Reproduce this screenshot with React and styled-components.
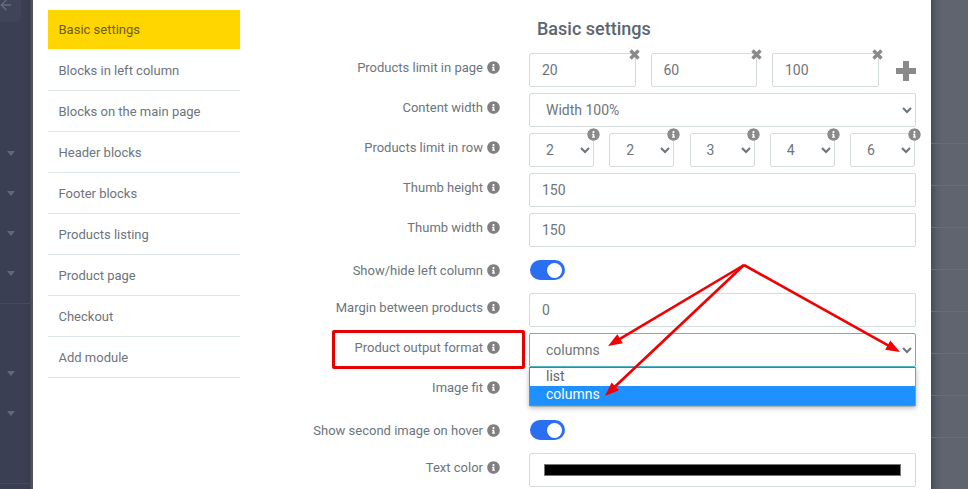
import React from 'react';
import styled, { createGlobalStyle } from 'styled-components';
import { FaInfoCircle } from 'react-icons/fa';
import { ArrowLeft } from 'lucide-react';

const GlobalStyle = createGlobalStyle`
    html, body {
        margin: 0;
        padding: 0;
        height: 100%;
        overflow: hidden;
    }
    body {
        font-family: Roboto, "Liberation Sans", sans-serif;
    }
`;

const Page = styled.div`
    position: relative;
    display: flex;
    width: 968px;
    height: 489px;
    overflow: hidden;
`;

const LeftStrip = styled.div`
    flex: 0 0 33px;
    background: linear-gradient(90deg, #3a3f53 0, #3a3f53 24px, #383b4c 30px, #50535f 31px, #50535f 33px);
    box-sizing: border-box;
`;

const BackBox = styled.div`
    width: 21px;
    height: 22px;
    background: #3f4458;
    border-radius: 0 0 5px 0;
    color: #676c7e;
    overflow: hidden;
    display: flex;
    align-items: flex-start;
    svg {
        margin: -3px 0 0 -2px;
        flex: none;
    }
`;

const Carets = styled.div`
    margin-top: 111px;
    display: flex;
    flex-direction: column;
`;

const CaretRow = styled.div`
    height: 40px;
    padding-left: 7px;
    display: flex;
    align-items: center;
    margin-top: ${p => p.$skip || 0}px;
    &::before {
        content: '';
        border-style: solid;
        border-width: 5px 4.5px 0;
        border-color: #62677a transparent transparent;
    }
`;

const StripLine = styled.div`
    height: 1px;
    background: #454a5d;
    margin-top: ${p => p.$top}px;
`;

const Modal = styled.div`
    flex: 0 0 898px;
    background: #fff;
    display: flex;
    padding-left: 15px;
    box-sizing: border-box;
`;

const RightStrip = styled.div`
    flex: 1;
    padding-top: 143px;
    background: linear-gradient(90deg, #484c5a 0, #5a5f6c 6px, #60646f 12px);
`;

const StripRow = styled.div`
    height: 42px;
    box-sizing: border-box;
    border-top: 1px solid #686c78;
`;

const Side = styled.ul`
    list-style: none;
    margin: 10px 0 0;
    padding: 0;
    width: 192px;
`;

const SideItem = styled.li`
    height: ${p => (p.$active ? 40 : 41)}px;
    box-sizing: border-box;
    padding-left: 10.5px;
    display: flex;
    align-items: center;
    font-size: 13px;
    color: ${p => (p.$active ? '#6a5f14' : '#6c757d')};
    background: ${p => (p.$active ? '#ffd600' : 'transparent')};
    border-bottom: 1px solid ${p => (p.$active ? '#fff6c4' : '#dee5e6')};
`;

const Main = styled.div`
    margin-left: 24px;
    width: 652px;
    padding-top: 19px;
`;

const Heading = styled.h2`
    margin: 0 0 14px 273px;
    height: 20px;
    line-height: 20px;
    font-size: 18px;
    font-weight: 500;
    color: #5a6670;
`;

const FormGrid = styled.div`
    display: grid;
    grid-template-columns: 236px 387px;
    column-gap: 29px;
    grid-auto-rows: 34px;
    row-gap: 6px;
`;

const Label = styled.label`
    display: flex;
    align-items: center;
    justify-content: flex-end;
    gap: 4px;
    font-size: 13px;
    color: #6c757d;
    white-space: nowrap;
    height: ${p => (p.$tall ? 34 : 28)}px;
`;

const InfoIcon = styled(FaInfoCircle)`
    width: 13px;
    height: 13px;
    color: #808080;
    flex: none;
`;

const Control = styled.div`
    display: flex;
    align-items: center;
    gap: ${p => p.$gap || 0}px;
`;

const Field = styled.div`
    position: relative;
    flex: ${p => (p.$fixed ? `0 0 ${p.$fixed}px` : 1)};
`;

const Input = styled.input`
    display: block;
    width: 100%;
    height: 34px;
    box-sizing: border-box;
    border: 1px solid #d5dcdd;
    border-radius: 2px;
    padding: 0 12px 1px;
    font: 14px Roboto, sans-serif;
    color: #6c757d;
    outline: none;
    background: #fff;
`;

const Select = styled.select`
    display: block;
    width: 100%;
    height: 34px;
    box-sizing: border-box;
    border: 1px solid ${p => (p.$focus ? '#52bcc8' : '#d5dcdd')};
    border-radius: 2px;
    padding: 0 12px 1px;
    font: 14px Roboto, sans-serif;
    color: #6c757d;
    background: #fff;
    outline: none;
`;

const RemoveMark = styled.svg`
    position: absolute;
    top: -4px;
    right: -4.5px;
    width: 11px;
    height: 11px;
    color: #8a8a8a;
`;

const RemoveIcon = () => (
    <RemoveMark viewBox="0 0 11 11">
        <path d="M1.5 1.5l8 8M9.5 1.5l-8 8" stroke="currentColor" strokeWidth="3.4" fill="none" />
    </RemoveMark>
);

const FieldInfo = styled(FaInfoCircle)`
    position: absolute;
    top: -5.5px;
    right: -5.5px;
    width: 13px;
    height: 13px;
    color: #8a8a8a;
    background: #fff;
    border-radius: 50%;
`;

const AddMark = styled.svg`
    width: 20px;
    height: 20px;
    color: #8a8a8a;
    flex: none;
    margin: 1px 0 0 2px;
`;

const AddIcon = () => (
    <AddMark viewBox="0 0 20 20">
        <path d="M7 0h6v7h7v6h-7v7H7v-7H0V7h7z" fill="currentColor" />
    </AddMark>
);

const Toggle = styled.div`
    width: 35px;
    height: 20px;
    margin-left: 1px;
    border-radius: 10px;
    background: #2b6ff0;
    position: relative;
    &::after {
        content: '';
        position: absolute;
        top: 2.5px;
        right: 3px;
        width: 15px;
        height: 15px;
        border-radius: 50%;
        background: #fff;
    }
`;

const ColorSwatch = styled.div`
    width: 100%;
    height: 34px;
    box-sizing: border-box;
    border: 1px solid #d5dcdd;
    border-radius: 2px;
    padding: 10px 14px;
    display: flex;
    background: #fff;
`;

const ColorBar = styled.div`
    flex: 1;
    background: #000;
    border: 1px solid #777;
`;

const Dropdown = styled.ul`
    position: absolute;
    top: 34px;
    left: 0;
    right: 0;
    margin: 0;
    padding: 0;
    list-style: none;
    background: #fff;
    border: 1px solid #7a8a90;
    border-top-color: #4a808c;
    border-right-color: #999;
    box-shadow: 0 2px 5px rgba(0, 0, 0, 0.28);
    z-index: 2;
`;

const DropdownItem = styled.li`
    height: ${p => (p.$selected ? 19 : 18)}px;
    line-height: 16px;
    padding-left: 16px;
    font-size: 14px;
    color: ${p => (p.$selected ? '#fff' : '#666')};
    background: ${p => (p.$selected ? '#1e90ff' : '#fff')};
`;

const Callout = styled.div`
    position: absolute;
    left: 332px;
    top: 329.5px;
    width: 193px;
    height: 39px;
    box-sizing: border-box;
    border: 3px solid #e60000;
    border-radius: 2px;
    pointer-events: none;
`;

const Arrows = styled.svg`
    position: absolute;
    left: 0;
    top: 0;
    z-index: 3;
    pointer-events: none;
`;

const menu = ['Blocks in left column', 'Blocks on the main page', 'Header blocks', 'Footer blocks', 'Products listing', 'Product page', 'Checkout', 'Add module'];

const Info = ({ children, tall }) => (
    <Label $tall={tall}>
        {children}
        <InfoIcon />
    </Label>
);

const arrows = [
    [744, 265, 608, 346],
    [744, 265, 605, 396],
    [744, 265, 900, 352],
];

const ArrowLine = ({ x1, y1, x2, y2 }) => {
    const angle = Math.atan2(y2 - y1, x2 - x1);
    const len = 15;
    const wing = 0.36;
    const a = [x2 - len * Math.cos(angle - wing), y2 - len * Math.sin(angle - wing)];
    const b = [x2 - len * Math.cos(angle + wing), y2 - len * Math.sin(angle + wing)];
    return (
        <g>
            <line x1={x1} y1={y1} x2={x2 - 8 * Math.cos(angle)} y2={y2 - 8 * Math.sin(angle)} stroke="#f00000" strokeWidth="2.6" />
            <polygon points={`${x2},${y2} ${a[0]},${a[1]} ${b[0]},${b[1]}`} fill="#f00000" />
        </g>
    );
};

const App = () => (
    <Page>
        <GlobalStyle />
        <LeftStrip>
            <BackBox><ArrowLeft size={16} strokeWidth={2} /></BackBox>
            <Carets>
                <CaretRow />
                <CaretRow />
                <CaretRow />
                <CaretRow />
                <StripLine $top={10} />
                <CaretRow $skip={49} />
                <CaretRow />
                <StripLine $top={50} />
            </Carets>
        </LeftStrip>
        <Modal>
            <Side>
                <SideItem $active>Basic settings</SideItem>
                {menu.map(m => <SideItem key={m}>{m}</SideItem>)}
            </Side>
            <Main>
                <Heading>Basic settings</Heading>
                <FormGrid>
                    <Info>Products limit in page</Info>
                    <Control $gap={15}>
                        {['20', '60', '100'].map(v => (
                            <Field key={v} $fixed={106.5}>
                                <Input defaultValue={v} />
                                <RemoveIcon />
                            </Field>
                        ))}
                        <AddIcon />
                    </Control>

                    <Info>Content width</Info>
                    <Control>
                        <Field><Select defaultValue="100"><option value="100">Width 100%</option></Select></Field>
                    </Control>

                    <Info>Products limit in row</Info>
                    <Control $gap={15.25}>
                        {['2', '2', '3', '4', '6'].map((v, i) => (
                            <Field key={i} $fixed={65}>
                                <Select defaultValue={v}><option>{v}</option></Select>
                                <FieldInfo />
                            </Field>
                        ))}
                    </Control>

                    <Info>Thumb height</Info>
                    <Control><Field><Input defaultValue="150" /></Field></Control>

                    <Info>Thumb width</Info>
                    <Control><Field><Input defaultValue="150" /></Field></Control>

                    <Info tall>Show/hide left column</Info>
                    <Control><Toggle /></Control>

                    <Info>Margin between products</Info>
                    <Control><Field><Input defaultValue="0" /></Field></Control>

                    <Info>Product output format</Info>
                    <Control>
                        <Field>
                            <Select $focus defaultValue="columns"><option>columns</option></Select>
                            <Dropdown>
                                <DropdownItem>list</DropdownItem>
                                <DropdownItem $selected>columns</DropdownItem>
                            </Dropdown>
                        </Field>
                    </Control>

                    <Info>Image fit</Info>
                    <Control><Field><Select><option> </option></Select></Field></Control>

                    <Info tall>Show second image on hover</Info>
                    <Control><Toggle /></Control>

                    <Info>Text color</Info>
                    <Control><ColorSwatch><ColorBar /></ColorSwatch></Control>
                </FormGrid>
            </Main>
        </Modal>
        <RightStrip>
            {Array.from({ length: 8 }, (_, i) => <StripRow key={i} />)}
        </RightStrip>
        <Callout />
        <Arrows width="968" height="489">
            {arrows.map(([x1, y1, x2, y2], i) => <ArrowLine key={i} x1={x1} y1={y1} x2={x2} y2={y2} />)}
        </Arrows>
    </Page>
);

export default App;
